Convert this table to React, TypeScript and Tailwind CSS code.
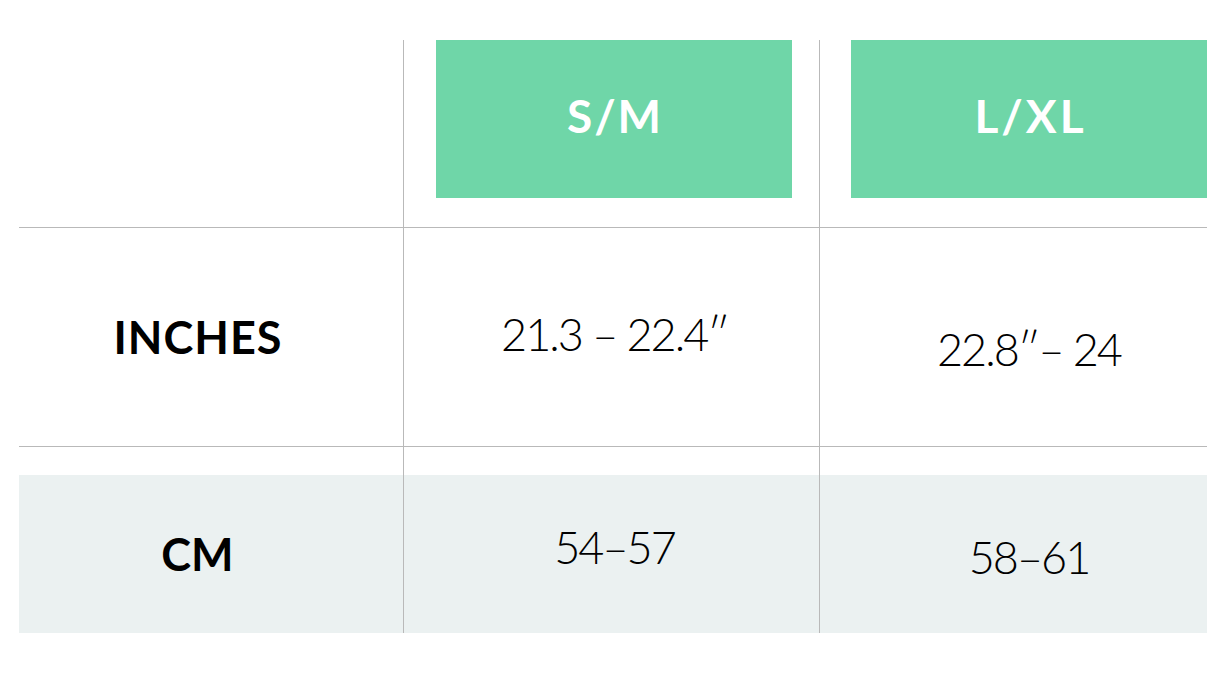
import React from "react";

const font = { fontFamily: "Lato, 'Noto Sans', sans-serif" };

function SizeHead({ label, className }: { label: string; className?: string }) {
    return (
        <div className="h-[158px] bg-[#6fd6a8] flex items-center justify-center text-white font-bold text-[46px] pb-[8px]">
            <span className={className}>{label}</span>
        </div>
    );
}

const num = "font-light text-[45px] tracking-[-2px]";

export default function App() {
    return (
        <div className="w-[1227px] h-[674px] bg-white pt-[40px] pl-[19px]" style={font}>
            <div className="w-[1188px] text-black">
                {/* header */}
                <div className="flex h-[187px]">
                    <div className="w-[384px]" />
                    <div className="w-[416px] border-l border-[#b9b9b9] pl-[32px] pr-[27px]">
                        <SizeHead label="S/M" className="tracking-[2px] pl-[2px]" />
                    </div>
                    <div className="w-[388px] border-l border-[#b9b9b9] pl-[31px]">
                        <SizeHead label="L/XL" className="tracking-[3px] pl-[3px]" />
                    </div>
                </div>

                {/* inches */}
                <div className="flex h-[220px] border-y border-[#b9b9b9]">
                    <div className="w-[384px] flex items-center justify-center pr-[27px] pt-[2px]">
                        <span className="font-bold text-[45px] tracking-[1px] pl-[1px]">INCHES</span>
                    </div>
                    <div className="w-[416px] border-l border-[#b9b9b9] flex items-center justify-center pl-[6px] pb-[4px]">
                        <span className={num}>21.3 – 22.4″</span>
                    </div>
                    <div className="w-[388px] border-l border-[#b9b9b9] flex items-center justify-center pl-[31px] pt-[26px]">
                        <span className={num}>22.8″– 24</span>
                    </div>
                </div>

                {/* cm */}
                <div className="flex h-[186px]">
                    <div className="w-[384px] pt-[28px]">
                        <div className="h-[158px] bg-[#ebf1f1] flex items-center justify-center pr-[27px] pt-[2px]">
                            <span className="font-bold text-[45px]">CM</span>
                        </div>
                    </div>
                    <div className="w-[416px] border-l border-[#b9b9b9] pt-[28px]">
                        <div className="h-[158px] bg-[#ebf1f1] flex items-center justify-center pl-[6px] pb-[12px]">
                            <span className={num}>54–57</span>
                        </div>
                    </div>
                    <div className="w-[388px] border-l border-[#b9b9b9] pt-[28px]">
                        <div className="h-[158px] bg-[#ebf1f1] flex items-center justify-center pl-[31px] pt-[8px]">
                            <span className={num}>58–61</span>
                        </div>
                    </div>
                </div>
            </div>
        </div>
    );
}
